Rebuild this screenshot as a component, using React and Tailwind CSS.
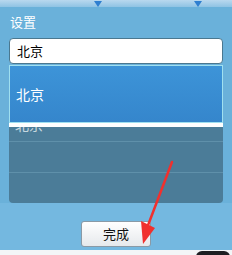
import React from 'react';

const font = { fontFamily: '"Noto Sans CJK SC", "Liberation Sans", sans-serif' };

const Tri = () => (
  <div className="w-0 h-0 border-l-[4px] border-r-[4px] border-t-[6px] border-l-transparent border-r-transparent border-t-[#2f7fd0]" />
);

export default function App() {
  return (
    <div className="relative w-[232px] h-[255px] overflow-hidden bg-[#6ab1da]" style={font}>
      {/* top strip */}
      <div className="h-[7px] pt-[1px] pl-[94px] flex gap-[92px] bg-gradient-to-b from-[#b9d8ee] to-[#8fc3e4]">
        <Tri />
        <Tri />
      </div>

      <div className="flex flex-col h-[243px]">
        <div className="px-[9px] pt-[6px]">
          <div className="text-[13px] leading-[18px] text-white pl-[1px]">设置</div>
          <div className="mt-[7px] h-[26px] bg-white rounded-[4px] border border-[#4a7890] flex items-center pl-[7px] text-[13px] text-black">
            北京
          </div>
          {/* picker */}
          <div className="relative mt-[1px] h-[138px] bg-[#4b7c98] rounded-b-[4px] overflow-hidden">
            {/* next item, partly hidden under the selection */}
            <div className="absolute left-[6px] top-[52px] text-[14px] leading-[14px] text-white/70">北京</div>
            <div className="relative h-[58px] bg-gradient-to-b from-[#3d94d8] to-[#3586cc] border border-[#9fe0f0] flex items-center pl-[6px] text-[14px] text-white">
              北京
            </div>
            <div className="relative h-[4px] bg-white" />
            <div className="h-[1px] mt-[14px] bg-[#5f90aa]" />
            <div className="h-[30px]" />
            <div className="h-[1px] bg-[#5f90aa]" />
          </div>
        </div>

        <div className="flex-1 flex items-end justify-center pb-[2px] bg-[#74b8e0]">
          <button className="w-[70px] h-[26px] mb-[1px] rounded-[3px] border border-[#8a9aa6] bg-gradient-to-b from-white to-[#e6e9ec] text-[13px] text-[#111] flex items-center justify-center">
            完成
          </button>
        </div>
      </div>

      {/* bottom strip */}
      <div className="h-[5px] pt-[1px] pr-[2px] flex justify-end bg-[#f3f5f7]">
        <div className="w-[34px] h-[6px] rounded-t-[6px] bg-[#1e1e22]" />
      </div>

      {/* red annotation arrow */}
      <svg className="absolute left-0 top-0 pointer-events-none" width="232" height="255" viewBox="0 0 232 255">
        <line x1="172" y1="162" x2="147" y2="228" stroke="#f0302e" strokeWidth="2.5" strokeLinecap="round" />
        <polygon points="141,221 155,228 143,244" fill="#f0302e" />
      </svg>
    </div>
  );
}
